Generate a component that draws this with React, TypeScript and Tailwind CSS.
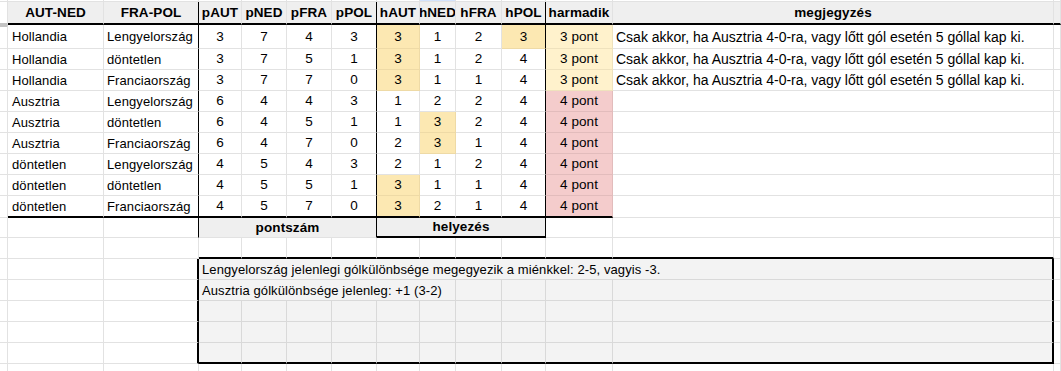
import React from 'react';
import { twMerge } from 'tailwind-merge';

const colW = [
  'w-[8px]',
  'w-[96px]',
  'w-[95px]',
  'w-[43px]',
  'w-[45px]',
  'w-[45px]',
  'w-[45px]',
  'w-[43px]',
  'w-[36px]',
  'w-[46px]',
  'w-[44px]',
  'w-[67px]',
  'w-[441px]',
];

const note = 'Csak akkor, ha Ausztria 4-0-ra, vagy lőtt gól esetén 5 góllal kap ki.';

type Row = [string, string, number, number, number, number, number, number, number, number, string, string];

const rows: Row[] = [
  ['Hollandia', 'Lengyelország', 3, 7, 4, 3, 3, 1, 2, 3, '3 pont', note],
  ['Hollandia', 'döntetlen', 3, 7, 5, 1, 3, 1, 2, 4, '3 pont', note],
  ['Hollandia', 'Franciaország', 3, 7, 7, 0, 3, 1, 1, 4, '3 pont', note],
  ['Ausztria', 'Lengyelország', 6, 4, 4, 3, 1, 2, 2, 4, '4 pont', ''],
  ['Ausztria', 'döntetlen', 6, 4, 5, 1, 1, 3, 2, 4, '4 pont', ''],
  ['Ausztria', 'Franciaország', 6, 4, 7, 0, 2, 3, 1, 4, '4 pont', ''],
  ['döntetlen', 'Lengyelország', 4, 5, 4, 3, 2, 1, 2, 4, '4 pont', ''],
  ['döntetlen', 'döntetlen', 4, 5, 5, 1, 3, 1, 1, 4, '4 pont', ''],
  ['döntetlen', 'Franciaország', 4, 5, 7, 0, 3, 2, 1, 4, '4 pont', ''],
];

const headers = ['AUT-NED', 'FRA-POL', 'pAUT', 'pNED', 'pFRA', 'pPOL', 'hAUT', 'hNED', 'hFRA', 'hPOL', 'harmadik', 'megjegyzés'];

// one spreadsheet cell: right + bottom gridline
const Cell = ({ className, children }: { className?: string; children?: React.ReactNode }) => (
  <div
    className={twMerge(
      'shrink-0 h-full flex items-center overflow-hidden whitespace-nowrap border-r border-b border-r-[#e2e2e2] border-b-[#e2e2e2]',
      className
    )}
  >
    {children}
  </div>
);

// black separators after these columns (B, F, J)
const blackRight = (i: number) => i === 2 || i === 6 || i === 10;

export default function App() {
  return (
    <div className="w-[1061px] h-[371px] overflow-hidden bg-white text-[13px] tracking-[0.1px] text-black font-['Liberation_Sans',Arial,sans-serif] leading-none">
      {/* partial row above header */}
      <div className="flex h-[2px]">
        {colW.map((w, i) => (
          <Cell key={i} className={twMerge(w, i === 8 && 'bg-[#d3e3fd]')} />
        ))}
        <Cell className="flex-1" />
      </div>

      {/* header */}
      <div className="flex h-[23px]">
        <Cell className="w-[8px] border-b-2 border-b-[#c4c4c4]" />
        {headers.map((h, i) => (
          <Cell
            key={h}
            className={twMerge(
              colW[i + 1],
              'bg-[#efefef] justify-center font-bold text-[13.5px] border-b-2 border-b-black',
              blackRight(i + 1) && 'border-r-black'
            )}
          >
            {h}
          </Cell>
        ))}
        <Cell className="flex-1 bg-[#efefef] border-b-2 border-b-black" />
      </div>

      {/* data rows */}
      {rows.map((r, ri) => {
        const first = ri === 0;
        const last = ri === rows.length - 1;
        const h = first ? 'h-[24px]' : last ? 'h-[22px]' : 'h-[21px]';
        const bottom = last ? 'border-b-2 border-b-black' : '';
        return (
          <div key={ri} className={twMerge('flex', h)}>
            <Cell className={twMerge('w-[8px]', first && 'border-t-2 border-t-[#c4c4c4]')} />
            <Cell className={twMerge(colW[1], 'pl-[4px]', bottom)}>{r[0]}</Cell>
            <Cell className={twMerge(colW[2], 'pl-[3px] border-r-black', bottom)}>{r[1]}</Cell>
            {r.slice(2, 10).map((v, ci) => {
              const col = ci + 3;
              const hl = col >= 7 && v === 3;
              return (
                <Cell
                  key={ci}
                  className={twMerge(
                    colW[col],
                    'justify-center text-[13.5px]',
                    hl && 'bg-[#fce8b2] border-r-[#eedaa6] border-b-[#eedaa6]',
                    blackRight(col) && 'border-r-black',
                    bottom
                  )}
                >
                  {v}
                </Cell>
              );
            })}
            <Cell
              className={twMerge(
                colW[11],
                'justify-center text-[13.5px]',
                r[10] === '3 pont'
                  ? 'bg-[#fff2cc] border-r-[#efe2bd] border-b-[#efe2bd]'
                  : 'bg-[#f4cccc] border-r-[#e2bcbc] border-b-[#e2bcbc]',
                bottom
              )}
            >
              {r[10]}
            </Cell>
            <Cell className={twMerge(colW[12], 'pl-[3px] text-[14px] tracking-normal')}>{r[11]}</Cell>
            <Cell className="flex-1" />
          </div>
        );
      })}

      {/* pontszám / helyezés */}
      <div className="flex h-[20px]">
        <Cell className="w-[8px]" />
        <Cell className={colW[1]} />
        <Cell className={twMerge(colW[2], 'border-r-black')} />
        <Cell className="w-[178px] bg-[#efefef] justify-center font-bold text-[13.5px] border-r-black">pontszám</Cell>
        <Cell className="w-[169px] bg-[#efefef] justify-center font-bold text-[13.5px] border-r-black border-b-2 border-b-black">
          helyezés
        </Cell>
        <Cell className={colW[11]} />
        <Cell className={colW[12]} />
        <Cell className="flex-1" />
      </div>

      {/* empty row above the box */}
      <div className="flex h-[21px]">
        {colW.map((w, i) => (
          <Cell key={i} className={twMerge(w, i >= 3 && 'border-b-2 border-b-black')} />
        ))}
        <Cell className="flex-1" />
      </div>

      {/* comment box */}
      {[0, 1, 2, 3, 4].map((bi) => {
        const bottom = bi === 4 ? 'border-b-2 border-b-black' : '';
        return (
          <div key={bi} className="flex h-[21px]">
            <Cell className="w-[8px]" />
            <Cell className={colW[1]} />
            <Cell className={twMerge(colW[2], 'border-r-2 border-r-black')} />
            {bi === 0 && (
              <Cell className="w-[855px] pl-[3px] bg-[#f3f3f3] border-r-2 border-r-black border-b-[#d9d9d9]">
                Lengyelország jelenlegi gólkülönbsége megegyezik a miénkkel: 2-5, vagyis -3.
              </Cell>
            )}
            {bi === 1 && (
              <>
                <Cell className="w-[257px] pl-[3px] bg-[#f3f3f3] border-r-[#d9d9d9] border-b-[#d9d9d9]">
                  Ausztria gólkülönbsége jelenleg: +1 (3-2)
                </Cell>
                {[9, 10, 11, 12].map((c) => (
                  <Cell
                    key={c}
                    className={twMerge(
                      colW[c],
                      'bg-[#f3f3f3] border-r-[#d9d9d9] border-b-[#d9d9d9]',
                      c === 12 && 'border-r-2 border-r-black'
                    )}
                  />
                ))}
              </>
            )}
            {bi >= 2 &&
              colW.slice(3).map((w, ci) => (
                <Cell
                  key={ci}
                  className={twMerge(
                    w,
                    'bg-[#f3f3f3] border-r-[#d9d9d9] border-b-[#d9d9d9]',
                    ci === 9 && 'border-r-2 border-r-black',
                    bottom
                  )}
                />
              ))}
            <Cell className="flex-1" />
          </div>
        );
      })}

      {/* row below the box */}
      <div className="flex h-[8px]">
        {colW.map((w, i) => (
          <Cell key={i} className={w} />
        ))}
        <Cell className="flex-1" />
      </div>
    </div>
  );
}
